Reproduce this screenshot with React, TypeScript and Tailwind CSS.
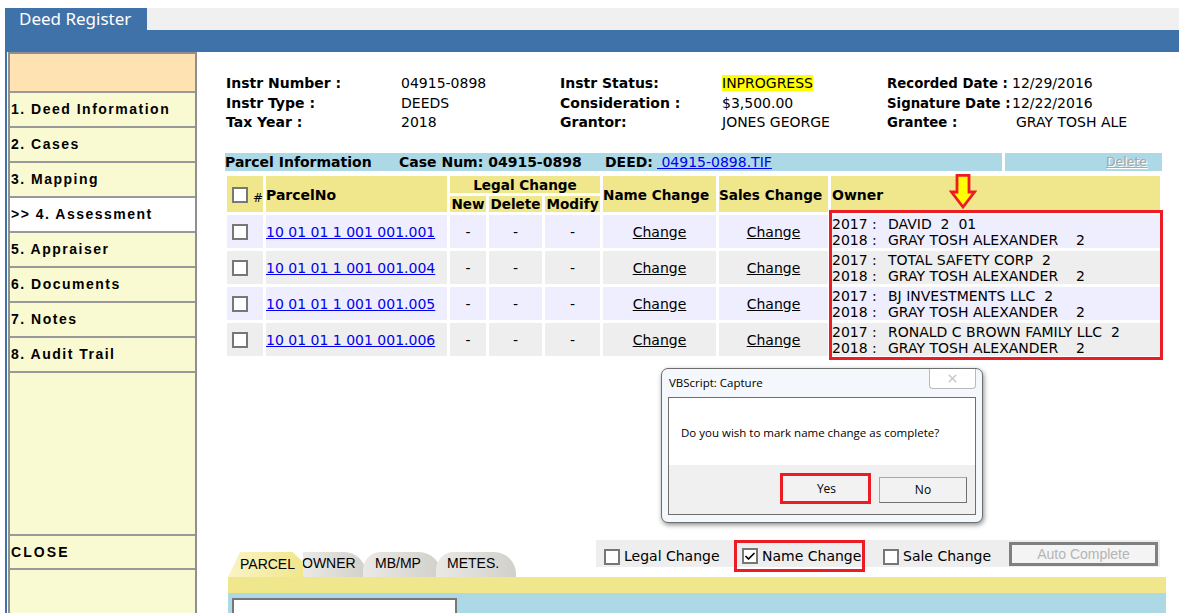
import { Check, X } from "lucide-react";

const menu = ["1. Deed Information", "2. Cases", "3. Mapping", ">> 4. Assessment", "5. Appraiser", "6. Documents", "7. Notes", "8. Audit Trail"];

const info = [
  ["Instr Number :", "04915-0898", "Instr Status:", "INPROGRESS", "Recorded Date :", "12/29/2016"],
  ["Instr Type :", "DEEDS", "Consideration :", "$3,500.00", "Signature Date :", "12/22/2016"],
  ["Tax Year :", "2018", "Grantor:", "JONES GEORGE", "Grantee :", "GRAY TOSH ALE"],
];

const parcels = [
  { no: "10 01 01 1 001 001.001", owner: "DAVID  2  01", bg: "bg-[#eeeeff]" },
  { no: "10 01 01 1 001 001.004", owner: "TOTAL SAFETY CORP  2", bg: "bg-[#eeeeee]" },
  { no: "10 01 01 1 001 001.005", owner: "BJ INVESTMENTS LLC  2", bg: "bg-[#eeeeff]" },
  { no: "10 01 01 1 001 001.006", owner: "RONALD C BROWN FAMILY LLC  2", bg: "bg-[#eeeeee]" },
];

function Box({ checked }: { checked?: boolean }) {
  return (
    <span className="flex h-[16px] w-[16px] shrink-0 items-center justify-center border-2 border-[#777777] bg-white">
      {checked ? <Check size={13} strokeWidth={3.5} className="text-black" /> : null}
    </span>
  );
}

function MenuRow({ label }: { label: string }) {
  return (
    <div className={`flex h-[35px] items-center border-b-2 border-[#999999] pl-[1px] text-[14px] font-bold tracking-[1.5px] ${label.startsWith(">>") ? "bg-white" : ""}`}>
      {label}
    </div>
  );
}

export default function App() {
  return (
    <div className="relative h-[613px] w-[1179px] overflow-hidden bg-white pl-[5px] pt-[8px] text-black [font-family:Liberation_Sans,sans-serif]">
      <div className="flex h-[22px] bg-[#f0f0f0]">
        <div className="flex w-[142px] items-center bg-[#3f72a9] pl-[14px] text-[17px] text-white [font-family:Noto_Sans,sans-serif]">
          Deed Register
        </div>
      </div>
      <div className="h-[22px] bg-[#3f72a9]" />

      <div className="flex h-[561px] border-l-2 border-[#3f72a9]">
        <aside className="ml-[1px] flex w-[189px] shrink-0 flex-col border-x-2 border-t-2 border-[#8f8f8f] bg-[#fafad2]">
          <div className="h-[39px] shrink-0 border-b-2 border-[#999999] bg-[#ffe2b2]" />
          {menu.map((m) => (
            <MenuRow key={m} label={m} />
          ))}
          <div className="mt-[161px] flex h-[36px] items-center border-y-2 border-[#999999] pl-[1px] text-[14px] font-bold tracking-[2.1px]">
            CLOSE
          </div>
        </aside>

        <main className="min-w-0 flex-1 text-[14px] [font-family:DejaVu_Sans,sans-serif]">
          <div className="ml-[29px] mt-[22px] grid h-[59px] grid-cols-[175px_159px_162px_165px_1fr] content-start">
            {info.map((r, i) => (
              <div key={i} className="col-span-5 grid h-[19.5px] grid-cols-subgrid items-center whitespace-nowrap leading-[19.5px]">
                <span className="font-bold">{r[0]}</span>
                <span>{r[1]}</span>
                <span className="font-bold">{r[2]}</span>
                <span>{r[3] === "INPROGRESS" ? <span className="bg-[#ffff00]">{r[3]}</span> : r[3]}</span>
                <span className="flex">
                  <span className="w-[125px] shrink-0 text-[13.3px] font-bold">{r[4]}</span>
                  <span className={i === 2 ? "pl-[4px]" : ""}>{r[5]}</span>
                </span>
              </div>
            ))}
          </div>

          <div className="ml-[28px] mt-[20px] flex h-[18px] w-[937px] gap-[3px] text-[14px] font-bold leading-[18px]">
            <div className="flex w-[777px] whitespace-pre bg-[#add8e6]">
              <span className="w-[174px]">Parcel Information</span>
              <span className="w-[206px]">Case Num: 04915-0898</span>
              <span className="w-[52px]">DEED:</span>
              <a href="#" className="font-normal text-[#0000ee] underline"> 04915-0898.TIF</a>
            </div>
            <div className="flex flex-1 justify-end bg-[#add8e6] pr-[15px] text-[12.5px] font-normal">
              <a href="#" className="text-[#a8a8a8] underline [text-shadow:1px_1px_0_#ffffff]">Delete</a>
            </div>
          </div>

          <div className="ml-[30px] mt-[5px] grid w-[933px] grid-cols-[36px_181px_36px_53px_55px_113px_109px_329px] grid-rows-[17px_16px_33px_33px_33px_33px] gap-[3px] text-[14px]">
            <div className="row-span-2 flex items-center gap-[5px] bg-[#f0e68c] pl-[5px] pt-[2px] text-[12px]">
              <Box /><span className="mt-[5px]">#</span>
            </div>
            <div className="row-span-2 flex items-center bg-[#f0e68c] pt-[2px] font-bold">ParcelNo</div>
            <div className="col-span-3 flex items-center justify-center bg-[#f0e68c] pt-[1px] text-[13.6px] font-bold">Legal Change</div>
            <div className="row-span-2 flex items-center bg-[#f0e68c] pt-[2px] text-[13.6px] font-bold">Name Change</div>
            <div className="row-span-2 flex items-center bg-[#f0e68c] pt-[2px] text-[13.6px] font-bold">Sales Change</div>
            <div className="row-span-2 flex items-center bg-[#f0e68c] pl-[1px] pt-[2px] font-bold">Owner</div>
            <div className="flex items-center justify-center bg-[#f0e68c] pt-[1px] text-[13.6px] font-bold">New</div>
            <div className="flex items-center justify-center bg-[#f0e68c] pt-[1px] text-[13.6px] font-bold">Delete</div>
            <div className="flex items-center justify-center bg-[#f0e68c] pt-[1px] text-[13.6px] font-bold">Modify</div>

            {parcels.map((p) => (
              <div key={p.no} className="col-span-8 grid grid-cols-subgrid">
                <div className={`flex items-center pl-[5px] ${p.bg}`}><Box /></div>
                <div className={`flex items-center pt-[1px] ${p.bg}`}>
                  <a href="#" className="text-[#0000ee] underline">{p.no}</a>
                </div>
                <div className={`flex items-center justify-center pt-[1px] ${p.bg}`}>-</div>
                <div className={`flex items-center justify-center pt-[1px] ${p.bg}`}>-</div>
                <div className={`flex items-center justify-center pt-[1px] ${p.bg}`}>-</div>
                <div className={`flex items-center justify-center pt-[1px] ${p.bg}`}><a href="#" className="underline">Change</a></div>
                <div className={`flex items-center justify-center pt-[1px] ${p.bg}`}><a href="#" className="underline">Change</a></div>
                <div className={`flex flex-col justify-center whitespace-pre pl-[1px] pt-[1px] leading-[16px] ${p.bg}`}>
                  <span className="flex"><span className="w-[56px] shrink-0">2017 :</span>{p.owner}</span>
                  <span className="flex"><span className="w-[56px] shrink-0">2018 :</span>{"GRAY TOSH ALEXANDER    2"}</span>
                </div>
              </div>
            ))}
          </div>

          <div className="mt-[184px] flex h-[37px] pl-[31px]">
            <div className="mt-[12px] flex h-[25px] text-[14px] [font-family:Liberation_Sans,sans-serif]">
              <div className="z-10 w-[75px] bg-gradient-to-r from-[#fbf3c4] to-[#f0e68c] pl-[12px] pt-[2px] [clip-path:polygon(0_100%,16%_0,86%_0,100%_40%,100%_100%)]">PARCEL</div>
              <div className="w-[63px] rounded-tr-[22px] bg-gradient-to-r from-[#ebe9e5] to-[#d2d0ca] pt-[1px] indent-[-1px]">OWNER</div>
              <div className="-ml-[3px] w-[78px] rounded-tl-[18px] rounded-tr-[22px] bg-gradient-to-r from-[#ebe9e5] to-[#d2d0ca] pl-[12px] pt-[1px]">MB/MP</div>
              <div className="-ml-[5px] w-[80px] rounded-tl-[18px] rounded-tr-[22px] bg-gradient-to-r from-[#ebe9e5] to-[#d2d0ca] pl-[11px] pt-[1px]">METES.</div>
            </div>
            <div className="ml-[80px] flex h-[27px] w-[564px] items-start whitespace-nowrap bg-[#eeeeee] pl-[8px]">
              <label className="mt-[6px] flex w-[113px] shrink-0 items-center gap-[4px]"><Box />Legal Change</label>
              <label className="relative ml-[17px] flex h-[32px] w-[131px] shrink-0 items-center gap-[4px] border-[3px] border-[#ed1c24] pl-[5px]"><Box checked />Name Change</label>
              <label className="ml-[18px] mt-[6px] flex w-[106px] shrink-0 items-center gap-[4px]"><Box />Sale Change</label>
              <button className="ml-[20px] mt-[2px] h-[24px] w-[149px] shrink-0 border-[3px] border-[#808080] bg-[#f4f4f4] text-[14px] leading-[16px] text-[#b5b5b5] [font-family:Liberation_Sans,sans-serif]">Auto Complete</button>
            </div>
          </div>

          <div className="ml-[31px] h-[16px] w-[938px] bg-[#f0e68c]" />
          <div className="ml-[31px] h-[40px] w-[938px] bg-[#add8e6] pl-[4px] pt-[5px]">
            <div className="h-[30px] w-[225px] border-2 border-[#777777] bg-white" />
          </div>
        </main>
      </div>

      {/* annotation over the owner column */}
      <div className="absolute left-[829px] top-[210px] h-[150px] w-[334px] border-[3px] border-[#ed1c24]" />
      <svg className="absolute left-[949px] top-[173px]" width="28" height="37" viewBox="0 0 28 37">
        <path d="M8 2.4H20V19H25.5L14 34L2.5 19H8Z" fill="#ffff00" stroke="#ed1c24" strokeWidth="2.8" />
      </svg>

      <div className="absolute left-[661px] top-[368px] flex h-[155px] w-[322px] flex-col rounded-[7px] border border-[#6e6e6e] bg-[#f4f7fb] px-[6px] pb-[7px] text-[11.5px] shadow-[1px_2px_5px_rgba(0,0,0,0.45)] [font-family:Open_Sans,sans-serif]">
        <div className="flex h-[28px] shrink-0 justify-between">
          <span className="pl-[1px] pt-[5px]">VBScript: Capture</span>
          <span className="flex h-[20px] w-[47px] items-center justify-center rounded-b-[4px] border border-t-0 border-[#b9b9b9] bg-white">
            <X size={13} strokeWidth={3} className="text-[#c9c9c9]" />
          </span>
        </div>
        <div className="flex flex-1 flex-col border border-[#6e6e6e] bg-white">
          <div className="flex h-[67px] shrink-0 items-start pl-[12px] pt-[26px]">Do you wish to mark name change as complete?</div>
          <div className="flex flex-1 items-start justify-end gap-[8px] bg-[#f0f0f0] pr-[8px] pt-[8px]">
            <button className="h-[31px] w-[91px] border-[3px] border-[#ed1c24] bg-[#f2f2f2] pl-[2px] pt-[1px] text-[12px]">Yes</button>
            <button className="mt-[4px] h-[26px] w-[88px] border border-[#a8a8a8] border-b-[#707070] border-r-[#707070] bg-[#f2f2f2] text-[12px]">No</button>
          </div>
        </div>
      </div>
    </div>
  );
}
